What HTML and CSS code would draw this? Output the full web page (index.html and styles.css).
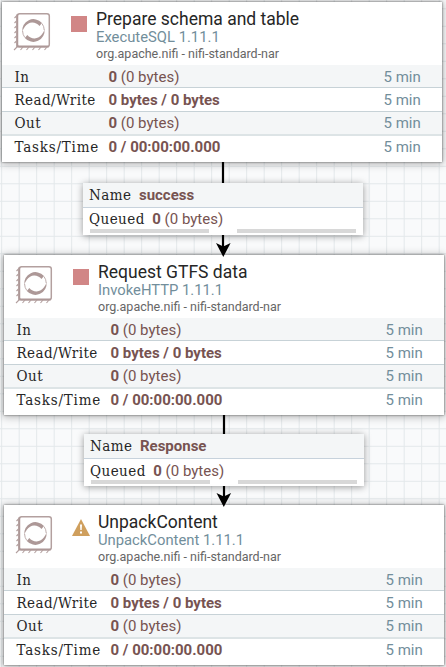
FILE: index.html
```
<!DOCTYPE html>
<html lang="en">
<head>
<meta charset="utf-8">
<title>NiFi Flow</title>
<link rel="stylesheet" href="styles.css">
</head>
<body>
<svg class="defs" width="0" height="0" aria-hidden="true">
  <symbol id="processor" viewBox="0 0 38 40">
    <rect x="4.300" y="2.700" width="32" height="33" rx="2.300" fill="none" stroke="#b3a09f" stroke-width="1.500"/>
    <path d="M4.200 3.500v32h31.500" fill="none" stroke="#ad9897" stroke-width="2"/>
    <path d="M3.500 5l-2 2M3.500 10l-2 2M3.500 15l-2 2M3.500 20l-2 2M3.500 25l-2 2M3.500 30l-2 2M4 36l-3 3M10 36l-2.500 3M16 36l-2.500 3M22 36l-2.500 3M28 36l-2.500 3M34 36l-2.500 3" stroke="#b3a09f" stroke-width="1.100"/>
    <path d="M9.300 21A11.300 11.300 0 0 1 29 12L26.500 15A9 9 0 0 0 12 15.500Q10 18 9.300 21Z" fill="#ad9897"/>
    <path d="M31.500 18A11.300 11.300 0 0 1 11.800 27L14.300 24A9 9 0 0 0 28.800 23.500Q31 21 31.500 18Z" fill="#ad9897"/>
    <path d="M9.600 20q0 3.500 2.200 6.500M31.200 19q0-3.500-2.200-6.500" fill="none" stroke="#ad9897" stroke-width=".8"/>
  </symbol>
</svg>
<main class="canvas">
  <section class="card n1">
    <header><svg class="icon"><use href="#processor"/></svg><span class="state stopped"></span>
      <div class="titles"><h2>Prepare schema and table</h2><p class="type">ExecuteSQL 1.11.1</p><p class="bundle">org.apache.nifi - nifi-standard-nar</p></div></header>
    <div class="row"><span class="label">In</span><span class="val"><b>0</b> (0 bytes)</span><span class="ago">5 min</span></div>
    <div class="row"><span class="label">Read/Write</span><span class="val"><b>0 bytes / 0 bytes</b></span><span class="ago">5 min</span></div>
    <div class="row"><span class="label">Out</span><span class="val"><b>0</b> (0 bytes)</span><span class="ago">5 min</span></div>
    <div class="row"><span class="label wide">Tasks/Time</span><span class="val"><b>0 / 00:00:00.000</b></span><span class="ago">5 min</span></div>
  </section>
  <section class="card n2">
    <header><svg class="icon"><use href="#processor"/></svg><span class="state stopped"></span>
      <div class="titles"><h2>Request GTFS data</h2><p class="type">InvokeHTTP 1.11.1</p><p class="bundle">org.apache.nifi - nifi-standard-nar</p></div></header>
    <div class="row"><span class="label">In</span><span class="val"><b>0</b> (0 bytes)</span><span class="ago">5 min</span></div>
    <div class="row"><span class="label">Read/Write</span><span class="val"><b>0 bytes / 0 bytes</b></span><span class="ago">5 min</span></div>
    <div class="row"><span class="label">Out</span><span class="val"><b>0</b> (0 bytes)</span><span class="ago">5 min</span></div>
    <div class="row"><span class="label wide">Tasks/Time</span><span class="val"><b>0 / 00:00:00.000</b></span><span class="ago">5 min</span></div>
  </section>
  <section class="card n3">
    <header><svg class="icon"><use href="#processor"/></svg><svg class="state warn" viewBox="0 0 18 17"><path d="M9 0L18 17H0Z" fill="#cf9f5d"/><path d="M8 5.500h2l-.3 5.500H8.300ZM8 12.500h2v2H8Z" fill="#fff"/></svg>
      <div class="titles"><h2>UnpackContent</h2><p class="type">UnpackContent 1.11.1</p><p class="bundle">org.apache.nifi - nifi-standard-nar</p></div></header>
    <div class="row"><span class="label">In</span><span class="val"><b>0</b> (0 bytes)</span><span class="ago">5 min</span></div>
    <div class="row"><span class="label">Read/Write</span><span class="val"><b>0 bytes / 0 bytes</b></span><span class="ago">5 min</span></div>
    <div class="row"><span class="label">Out</span><span class="val"><b>0</b> (0 bytes)</span><span class="ago">5 min</span></div>
    <div class="row"><span class="label wide">Tasks/Time</span><span class="val"><b>0 / 00:00:00.000</b></span><span class="ago">5 min</span></div>
  </section>
  <svg class="edges" viewBox="0 0 446 667">
    <path d="M223 162V248M224 415V499" stroke="#000" stroke-width="2.200"/>
    <path d="M216 243l7.300 3.500 7.300-3.500-7.300 14ZM216.500 493l7.300 3.500 7.300-3.500-7.300 14Z"/>
  </svg>
  <section class="conn c1">
    <div class="crow name"><span class="label">Name</span><b>success</b></div>
    <div class="crow"><span class="label">Queued</span><span><b>0</b> (0 bytes)</span></div>
    <div class="bars"><i></i><i></i></div>
  </section>
  <section class="conn c2">
    <div class="crow name"><span class="label">Name</span><b>Response</b></div>
    <div class="crow"><span class="label">Queued</span><span><b>0</b> (0 bytes)</span></div>
    <div class="bars"><i></i><i></i></div>
  </section>
</main>
</body>
</html>
```
FILE: styles.css
```
* { box-sizing: border-box; }
body { margin: 0; font-family: Roboto, sans-serif; }
.defs { position: absolute; }
.canvas {
  position: relative;
  width: 446px;
  height: 667px;
  overflow: hidden;
  background-color: #f9fafb;
  background-image: linear-gradient(#e3e8ea 1.3px, transparent 1.3px), linear-gradient(90deg, #e3e8ea 1.3px, transparent 1.3px);
  background-size: 17.5px 17.5px;
  background-position: 1.200px 8.300px;
}
.card {
  position: absolute;
  width: 440px;
  height: 160px;
  background: #fff;
  box-shadow: 0 0 2px rgba(0,0,0,.6), 0 1px 8px 1px rgba(0,0,0,.28);
}
.n1 { left: 2px; top: 2px; }
.n2 { left: 4px; top: 255px; }
.n3 { left: 4px; top: 505px; }
header { display: flex; height: 63px; }
.icon { width: 38px; height: 40px; margin: 9px 0 0 11px; flex: none; }
.state { margin: 14px 0 0 20px; flex: none; }
.stopped { width: 16px; height: 16px; background: #d18686; }
.n2 .titles { margin-left: 9px; }
.warn { width: 18px; height: 17px; margin-left: 19px; }
.titles { margin-left: 9px; padding-top: 7px; white-space: nowrap; }
.warn + .titles { margin-left: 8px; }
h2, p { margin: 0; }
h2 { font-size: 17.5px; line-height: 20px; font-weight: 400; color: #262626; }
.type { font-size: 14.8px; line-height: 17px; color: #728e9b; }
.bundle { font-size: 12.5px; line-height: 16px; color: #666; }
.row {
  display: flex;
  align-items: center;
  height: 23px;
  padding-left: 12.500px;
  font-size: 15px;
  border-bottom: 1px solid #c7d2d7;
}
.row:nth-child(even) { background: #f4f6f7; }
.row:nth-child(2) { padding-top: 1px; }
.row:nth-child(3) { height: 24px; }
.row:nth-child(4) { border-bottom: 2px solid #dde4e6; height: 24px; }
.row:last-child { border: 0; height: 22px; }
.label {
  font-family: "Roboto Slab", "DejaVu Serif Condensed", "DejaVu Serif", serif;
  font-stretch: condensed;
  font-size: 15px;
  letter-spacing: .45px;
  color: #262626;
  white-space: nowrap;
}
.label.wide { letter-spacing: .8px; }
.row .label { width: 94px; }
.val, .crow { color: #775351; }
.val { flex: 1; }
.ago { width: 58.500px; color: #728e9b; }
b { font-weight: 700; }
.edges { position: absolute; inset: 0; width: 446px; height: 667px; }
.conn {
  position: absolute;
  width: 280px;
  height: 52px;
  background: #fff;
  box-shadow: 0 1px 7px rgba(0,0,0,.4);
}
.c1 { left: 83px; top: 183px; }
.c2 { left: 84px; top: 434px; }
.crow { display: flex; align-items: center; gap: 7.500px; height: 21px; padding-left: 6px; font-size: 15px; }
.c2 .crow:nth-child(2) { padding-top: 2px; }
.crow.name { height: 25px; background: #f4f6f7; border-bottom: 1px solid #c7d2dc; }
.bars { display: flex; gap: 28px; padding-left: 7px; }
.bars i { width: 119px; height: 4px; background: #d8d8d8; }
```
